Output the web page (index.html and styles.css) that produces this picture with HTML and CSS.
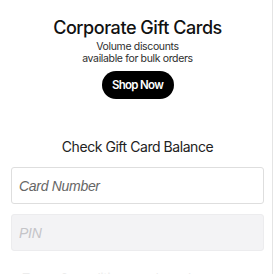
FILE: index.html
```html
<!DOCTYPE html>
<html lang="en">
<head>
<meta charset="utf-8">
<title>Corporate Gift Cards</title>
<link rel="stylesheet" href="styles.css">
</head>
<body>
<div class="page">
  <div class="top-card"></div>
  <section class="promo">
    <h2 class="promo-title">Corporate Gift Cards</h2>
    <p class="promo-text">Volume discounts<br>available for bulk orders</p>
    <button class="shop-btn" type="button">Shop Now</button>
  </section>
  <section class="balance">
    <h3 class="balance-title">Check Gift Card Balance</h3>
    <input class="field" type="text" placeholder="Card Number">
    <input class="field field-disabled" type="text" placeholder="PIN" disabled>
  </section>
  <p class="footer-note"><span>Terms &amp; conditions apply</span><span>Learn more</span></p>
</div>
</body>
</html>
```
FILE: styles.css
```css
html, body {
  margin: 0;
  padding: 0;
  background: #ffffff;
  overflow: hidden;
}
.page {
  width: 261px;
  height: 274px;
  padding: 0 0 0 11px;
  border-right: 1px solid #e4e4e4;
  font-family: Inter, "Noto Sans", sans-serif;
  color: #111;
  display: flex;
  flex-direction: column;
  overflow: hidden;
}
.top-card {
  align-self: center;
  width: 128px;
  height: 2px;
  margin-left: -8px;
  background: #ececec;
  border-radius: 0 0 6px 6px;
  box-shadow: 0 1px 2px rgba(0,0,0,0.06);
}
.promo {
  width: 253px;
  display: flex;
  flex-direction: column;
  align-items: center;
}
.promo-title {
  margin: 17px 0 0;
  font-size: 18px;
  line-height: 22px;
  font-weight: 500;
  letter-spacing: -0.45px;
  color: #111;
}
.promo-text {
  margin: 2px 0 0;
  font-size: 10.5px;
  line-height: 12px;
  letter-spacing: -0.35px;
  text-align: center;
  color: #2e2e2e;
}
.shop-btn {
  margin-top: 6px;
  width: 72px;
  height: 28px;
  border: 0;
  border-radius: 14px;
  background: #000;
  color: #fff;
  font-family: Inter, sans-serif;
  font-size: 11.5px;
  font-weight: 600;
  letter-spacing: -0.7px;
  padding: 0;
}
.balance {
  width: 253px;
  display: flex;
  flex-direction: column;
  align-items: center;
}
.balance-title {
  margin: 39px 0 0;
  font-size: 14px;
  line-height: 18px;
  font-weight: 400;
  letter-spacing: -0.45px;
  color: #222;
}
.field {
  box-sizing: border-box;
  width: 253px;
  height: 37px;
  margin-top: 11px;
  padding: 0 7px;
  border: 1px solid #dedede;
  border-radius: 3px;
  background: #fff;
  font-family: "Liberation Sans", Arial, sans-serif;
  font-style: italic;
  font-size: 14px;
  letter-spacing: -0.3px;
  outline: none;
}
.field::placeholder {
  color: #666;
}
.field-disabled {
  margin-top: 10px;
  background: #f3f3f5;
  border-color: #ececee;
}
.field-disabled::placeholder {
  color: #c4c4c8;
}
.footer-note {
  margin: 19px 0 0;
  width: 253px;
  display: flex;
  justify-content: space-around;
  font-size: 12px;
  line-height: 15px;
  color: #ececec;
}
```
